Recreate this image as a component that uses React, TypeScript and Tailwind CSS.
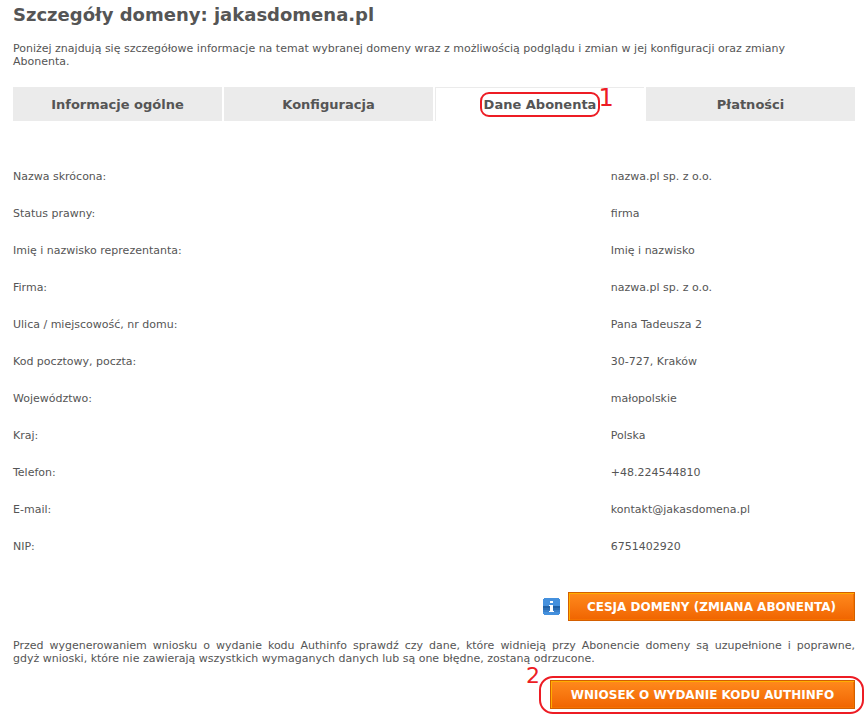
import React from "react";

interface Field {
    label: string;
    value: string;
}

const tabs = ["Informacje ogólne", "Konfiguracja", "Dane Abonenta", "Płatności"];
const activeTab = "Dane Abonenta";

const fields: Field[] = [
    { label: "Nazwa skrócona:", value: "nazwa.pl sp. z o.o." },
    { label: "Status prawny:", value: "firma" },
    { label: "Imię i nazwisko reprezentanta:", value: "Imię i nazwisko" },
    { label: "Firma:", value: "nazwa.pl sp. z o.o." },
    { label: "Ulica / miejscowość, nr domu:", value: "Pana Tadeusza 2" },
    { label: "Kod pocztowy, poczta:", value: "30-727, Kraków" },
    { label: "Województwo:", value: "małopolskie" },
    { label: "Kraj:", value: "Polska" },
    { label: "Telefon:", value: "+48.224544810" },
    { label: "E-mail:", value: "kontakt@jakasdomena.pl" },
    { label: "NIP:", value: "6751402920" },
];

const buttonClass =
    "h-[29px] pt-[2px] border border-[#d45f00] bg-linear-to-b from-[#ff8a1c] to-[#f06400] shadow-[inset_1px_1px_0_#ffae00,inset_-1px_-1px_0_#f57200] text-white text-[12px] font-bold whitespace-nowrap";

const InfoIcon: React.FC = () => (
    <svg width="17" height="17" viewBox="0 0 17 17" aria-hidden="true" shapeRendering="crispEdges">
        <path d="M1 0h15v1h1v15h-1v1H1v-1H0V1h1z" fill="#4490dd" />
        <path d="M0 8h17v2H0z" fill="#1f60a5" />
        <path d="M0 10h17v2H0z" fill="#2a6db4" />
        <path d="M0 12h17v2H0z" fill="#3a80ca" />
        <path d="M7 3h3v2H7zM6 7h4v6h1v1H6v-1h1V8H6z" fill="#fff" />
    </svg>
);

const App: React.FC = () => {
    return (
        <main className="px-[13px] pt-[4px] bg-white text-[#555] text-[11px] leading-[13px] font-['Verdana','DejaVu_Sans',sans-serif]">
            <h1 className="text-[18px] leading-[22px] font-bold">Szczegóły domeny: jakasdomena.pl</h1>
            <p className="mt-[16px] pr-5">
                Poniżej znajdują się szczegółowe informacje na temat wybranej domeny wraz z możliwością podglądu i zmian w jej konfiguracji oraz zmiany Abonenta.
            </p>

            <nav className="mt-[19px] grid grid-cols-4 gap-[2px]">
                {tabs.map((tab) => (
                    <button
                        key={tab}
                        type="button"
                        className={`h-[34px] text-[13px] leading-[17px] font-bold ${tab === activeTab ? "bg-white border-t border-l border-[#ebebeb]" : "bg-[#ebebeb]"}`}
                    >
                        {tab === activeTab ? (
                            <span className="relative inline-block whitespace-nowrap">
                                {tab}
                                <span className="absolute -inset-x-1 -inset-y-1 border-2 border-[#ed1c24] rounded-[9px]" />
                                <span className="absolute left-full -top-[8px] pl-[2px] text-[24px] leading-[20px] font-normal text-[#ed1c24]">1</span>
                            </span>
                        ) : (
                            tab
                        )}
                    </button>
                ))}
            </nav>

            <table className="mt-[37px] w-full table-fixed text-left">
                <tbody>
                    {fields.map((field) => (
                        <tr key={field.label} className="h-[37px]">
                            <th className="w-[71%] font-normal">{field.label}</th>
                            <td>{field.value}</td>
                        </tr>
                    ))}
                </tbody>
            </table>

            <div className="mt-[27px] flex items-center justify-end gap-2">
                <InfoIcon />
                <button type="button" className={`w-[287px] ${buttonClass}`}>CESJA DOMENY (ZMIANA ABONENTA)</button>
            </div>

            {/* nbsp keeps the conjunction on the second line */}
            <p className="mt-[18px] text-justify">
                Przed wygenerowaniem wniosku o wydanie kodu Authinfo sprawdź czy dane, które widnieją przy Abonencie domeny są uzupełnione i poprawne, gdyż&nbsp;wnioski, które nie zawierają wszystkich wymaganych danych lub są one błędne, zostaną odrzucone.
            </p>

            <div className="mt-[15px] pb-[14px] flex justify-end">
                <div className="relative">
                    <button type="button" className={`block w-[305px] ${buttonClass}`}>WNIOSEK O WYDANIE KODU AUTHINFO</button>
                    <span className="absolute -left-[11px] -right-[9px] -top-[4px] -bottom-[5px] border-2 border-[#ed1c24] rounded-[14px] pointer-events-none" />
                    <span className="absolute right-full -top-[14px] pr-[10px] text-[22px] leading-[20px] text-[#ed1c24]">2</span>
                </div>
            </div>
        </main>
    );
};

export default App;
